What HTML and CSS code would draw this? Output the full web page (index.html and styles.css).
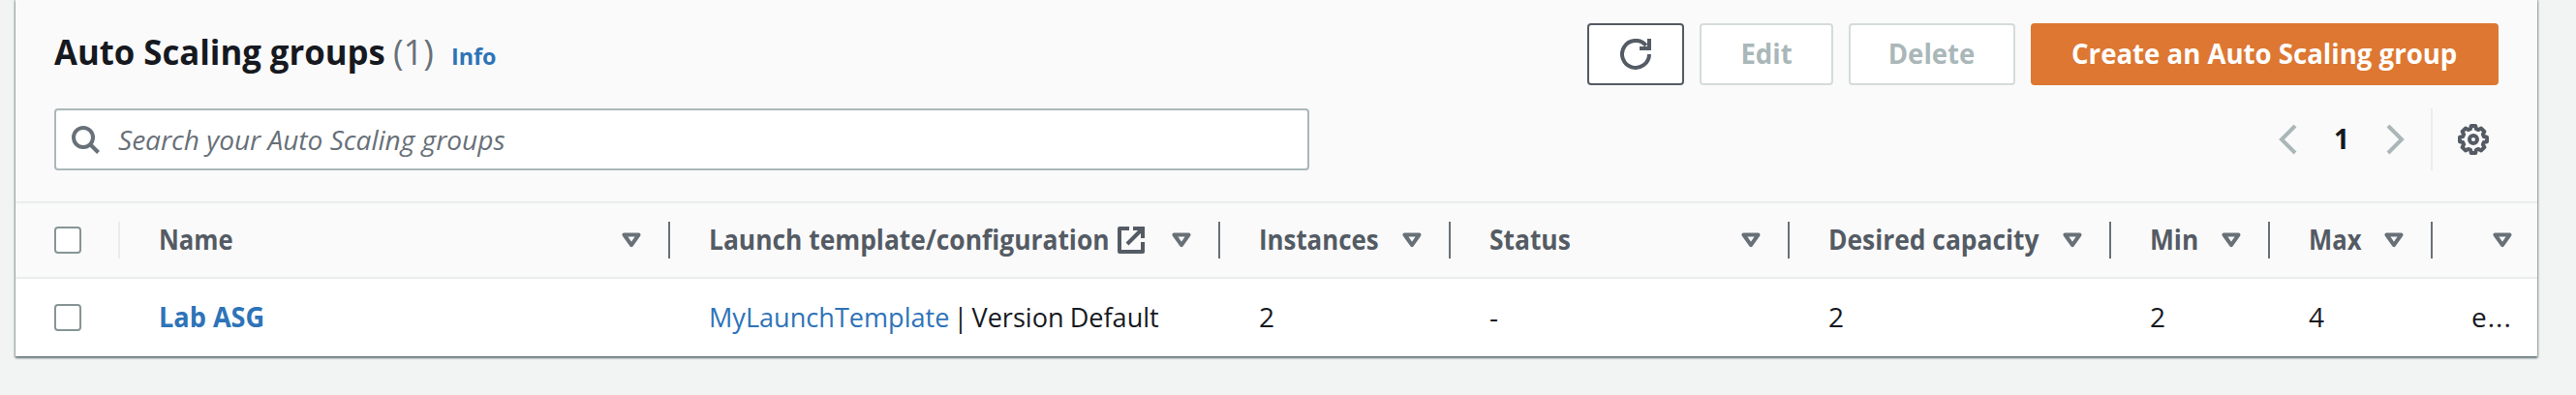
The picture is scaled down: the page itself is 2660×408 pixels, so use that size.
FILE: index.html
```html
<!DOCTYPE html>
<html lang="en">
<head>
<meta charset="utf-8">
<title>Auto Scaling groups</title>
<link rel="stylesheet" href="styles.css">
</head>
<body>
<svg class="defs" aria-hidden="true">
  <symbol id="sort" viewBox="0 0 20 16"><path d="M2.5 2.5h15L10 13.2z" fill="none" stroke="currentColor" stroke-width="4" stroke-linejoin="round"/></symbol>
</svg>
<main class="panel">
  <header class="head">
    <div class="row">
      <h2 class="title"><span class="title-text">Auto Scaling groups</span><span class="count">(1)</span><a class="info">Info</a></h2>
      <div class="actions">
        <button class="btn refresh" aria-label="Refresh"><svg width="32" height="32" viewBox="0 0 32 32" fill="none" stroke="currentColor" stroke-width="4"><path d="M30 16a14 14 0 1 1-3.2-9"/><path d="M30 0v10H20"/></svg></button>
        <button class="btn disabled edit"><span>Edit</span></button>
        <button class="btn disabled delete"><span>Delete</span></button>
        <button class="btn primary"><span>Create an Auto Scaling group</span></button>
      </div>
    </div>
    <div class="row tools">
      <div class="search">
        <svg width="32" height="32" viewBox="0 0 32 32" fill="none" stroke="currentColor" stroke-width="4"><circle cx="14" cy="14" r="10"/><path d="M21 21l8.500 8.500"/></svg>
        <span>Search your Auto Scaling groups</span>
      </div>
      <nav class="pager">
        <svg class="chev" width="20" height="32" viewBox="0 0 20 32" fill="none" stroke="currentColor" stroke-width="4"><path d="M18 2L4 16l14 14"/></svg>
        <b class="page">1</b>
        <svg class="chev" width="20" height="32" viewBox="0 0 20 32" fill="none" stroke="currentColor" stroke-width="4"><path d="M2 2l14 14L2 30"/></svg>
        <i class="rule"></i>
        <svg class="gear" width="32" height="32" viewBox="0 0 32 32" fill="none" stroke="currentColor" stroke-width="4" stroke-linejoin="round"><path d="M13.8 2h4.400l.8 3.200 2.300.9 2.800-1.500 3.300 3.300-1.500 2.800.9 2.300 3.200.8v4.400l-3.200.8-.9 2.300 1.500 2.800-3.300 3.300-2.800-1.500-2.300.9-.8 3.200h-4.400l-.8-3.200-2.300-.9-2.800 1.500-3.300-3.300 1.500-2.800-.9-2.300L2 18.200v-4.400l3.200-.8.9-2.300-1.500-2.800 3.300-3.300 2.800 1.500 2.300-.9z"/><circle cx="16" cy="16" r="4"/></svg>
      </nav>
    </div>
  </header>
  <div class="grid thead">
    <div class="cell check"><i class="box"></i></div>
    <div class="cell"><span class="label narrow">Name</span><svg class="sort"><use href="#sort"/></svg></div>
    <div class="cell"><span class="label launch">Launch template/configuration</span><svg class="ext" width="28" height="28" viewBox="0 0 28 28" fill="none" stroke="currentColor" stroke-width="4"><path d="M12 2H2v24h24V16" stroke-linejoin="round"/><path d="M16 2h10v10M26 2L10 18"/></svg><svg class="sort"><use href="#sort"/></svg></div>
    <div class="cell"><span class="label instances">Instances</span><svg class="sort"><use href="#sort"/></svg></div>
    <div class="cell"><span class="label">Status</span><svg class="sort"><use href="#sort"/></svg></div>
    <div class="cell"><span class="label">Desired capacity</span><svg class="sort"><use href="#sort"/></svg></div>
    <div class="cell"><span class="label">Min</span><svg class="sort"><use href="#sort"/></svg></div>
    <div class="cell"><span class="label narrow">Max</span><svg class="sort"><use href="#sort"/></svg></div>
    <div class="cell last"><svg class="sort"><use href="#sort"/></svg></div>
  </div>
  <div class="grid tbody">
    <div class="cell check"><i class="box"></i></div>
    <div class="cell"><a class="label link">Lab ASG</a></div>
    <div class="cell"><span class="template"><a>MyLaunchTemplate</a> | <span class="version">Version Default</span></span></div>
    <div class="cell">2</div>
    <div class="cell">-</div>
    <div class="cell">2</div>
    <div class="cell">2</div>
    <div class="cell">4</div>
    <div class="cell last"><span class="zone">e...</span></div>
  </div>
</main>
</body>
</html>
```

FILE: styles.css
```css
* { box-sizing: border-box; }
body {
  margin: 0;
  height: 408px;
  overflow: hidden;
  background: #f2f4f4;
  color: #16191f;
  font: 500 28px/40px "Open Sans", sans-serif;
}
.defs { position: absolute; width: 0; height: 0; }
svg { display: block; flex: none; }

.panel {
  width: 2604px;
  height: 368px;
  margin-left: 16px;
  background: #fff;
  box-shadow: 0 2px 2px 0 rgba(0, 28, 36, .5), 0 0 2px 1px rgba(0, 28, 36, .3);
}
.head {
  height: 210px;
  padding: 24px 40px 0;
  background: #fafafa;
  border-bottom: 2px solid #eaeded;
}
.row { display: flex; justify-content: space-between; height: 64px; }

.title {
  display: flex;
  align-items: baseline;
  margin: 0;
  padding-top: 4px;
  font-size: 36px;
  line-height: 52px;
}
.title-text { width: 350px; white-space: nowrap; transform: scaleX(.964); transform-origin: 0 0; }
.count { width: 60px; color: #687078; font-weight: 500; }
.info { color: #2e73b8; font-size: 24px; transform: scaleX(.97); transform-origin: 0 0; }

.actions { display: flex; gap: 16px; }
.btn {
  display: flex;
  align-items: center;
  justify-content: center;
  height: 64px;
  padding: 0;
  border: 2px solid #545b64;
  border-radius: 4px;
  background: #fff;
  color: #545b64;
  font: 700 28px/40px "Open Sans", sans-serif;
}
.btn span { padding-bottom: 2px; white-space: nowrap; transform: scaleX(.985); }
.refresh { width: 100px; }
.edit { width: 138px; }
.delete { width: 172px; }
.disabled { border-color: #d5dbdb; color: #aab7b8; }
.primary { width: 483px; border-color: #dd7732; background: #dd7732; color: #fff; }

.tools { margin-top: 24px; }
.search {
  display: flex;
  align-items: center;
  gap: 18px;
  width: 1296px;
  padding-left: 14px;
  border: 2px solid #aab7b8;
  border-radius: 4px;
  background: #fff;
  color: #687078;
  font-style: italic;
}
.search span { transform: scaleX(1.002); transform-origin: 0 0; }
.pager { display: flex; align-items: center; padding-right: 10px; color: #545b64; }
.chev { color: #aab7b8; }
.page { width: 92px; padding-bottom: 2px; color: #16191f; text-align: center; }
.rule { width: 2px; height: 64px; margin: 0 26px; background: #eaeded; }

.grid {
  display: grid;
  grid-template-columns: 108px 568px 568px 238px 350px 332px 164px 168px 108px;
}
.thead { height: 78px; background: #fafafa; border-bottom: 2px solid #eaeded; color: #545b64; font-weight: 700; }
.tbody { height: 80px; }
.cell {
  position: relative;
  display: flex;
  align-items: center;
  padding: 0 30px 0 40px;
  white-space: nowrap;
}
.tbody .cell { padding-bottom: 2px; }
.thead .cell::after {
  content: "";
  position: absolute;
  top: 19px;
  right: 0;
  width: 2px;
  height: 38px;
  background: #687078;
}
.thead .check::after { background: #eaeded; }
.thead .last::after { display: none; }
.thead .last { padding-right: 26px; }
.tbody .check { padding-bottom: 0; }
.box { width: 28px; height: 28px; border: 2px solid #879596; border-radius: 4px; background: #fff; }
.label { transform: scaleX(.942); transform-origin: 0 0; }
.thead .label { padding-bottom: 2px; }
.narrow { transform: scaleX(.915); }
.instances { transform: scaleX(.923); }
.launch { width: 422px; }
.sort { width: 20px; height: 16px; margin-left: auto; color: #687078; }
.template { transform: scaleX(.967); transform-origin: 0 0; word-spacing: -3px; }
.version { word-spacing: -1px; }
.link { font-weight: 700; transform: scaleX(.968); }
.link, .template a { color: #2e73b8; }
.zone { letter-spacing: 1px; }
```
